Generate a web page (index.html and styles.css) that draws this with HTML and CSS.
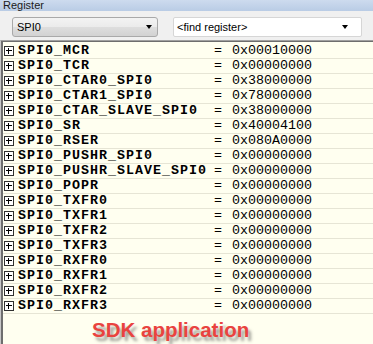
FILE: index.html
```html
<!DOCTYPE html>
<html lang="en">
<head>
    <meta charset="UTF-8">
    <meta name="viewport" content="width=device-width, initial-scale=1.0">
    <title>Register</title>
    <link rel="stylesheet" href="styles.css">
</head>
<body>
    <div class="panel">
        <div class="title">Register</div>

        <div class="toolbar">
            <div class="combo peripheral">
                <span>SPI0</span>
                <span class="arrow"></span>
            </div>
            <div class="combo finder">
                <span>&lt;find register&gt;</span>
                <span class="arrow"></span>
            </div>
        </div>

        <div class="list">
            <div class="row"><span class="expand"></span><span class="name">SPI0_MCR</span><span class="eq">=</span><span class="value">0x00010000</span></div>
            <div class="row"><span class="expand"></span><span class="name">SPI0_TCR</span><span class="eq">=</span><span class="value">0x00000000</span></div>
            <div class="row"><span class="expand"></span><span class="name">SPI0_CTAR0_SPI0</span><span class="eq">=</span><span class="value">0x38000000</span></div>
            <div class="row"><span class="expand"></span><span class="name">SPI0_CTAR1_SPI0</span><span class="eq">=</span><span class="value">0x78000000</span></div>
            <div class="row"><span class="expand"></span><span class="name">SPI0_CTAR_SLAVE_SPI0</span><span class="eq">=</span><span class="value">0x38000000</span></div>
            <div class="row"><span class="expand"></span><span class="name">SPI0_SR</span><span class="eq">=</span><span class="value">0x40004100</span></div>
            <div class="row"><span class="expand"></span><span class="name">SPI0_RSER</span><span class="eq">=</span><span class="value">0x080A0000</span></div>
            <div class="row"><span class="expand"></span><span class="name">SPI0_PUSHR_SPI0</span><span class="eq">=</span><span class="value">0x00000000</span></div>
            <div class="row"><span class="expand"></span><span class="name">SPI0_PUSHR_SLAVE_SPI0</span><span class="eq">=</span><span class="value">0x00000000</span></div>
            <div class="row"><span class="expand"></span><span class="name">SPI0_POPR</span><span class="eq">=</span><span class="value">0x00000000</span></div>
            <div class="row"><span class="expand"></span><span class="name">SPI0_TXFR0</span><span class="eq">=</span><span class="value">0x00000000</span></div>
            <div class="row"><span class="expand"></span><span class="name">SPI0_TXFR1</span><span class="eq">=</span><span class="value">0x00000000</span></div>
            <div class="row"><span class="expand"></span><span class="name">SPI0_TXFR2</span><span class="eq">=</span><span class="value">0x00000000</span></div>
            <div class="row"><span class="expand"></span><span class="name">SPI0_TXFR3</span><span class="eq">=</span><span class="value">0x00000000</span></div>
            <div class="row"><span class="expand"></span><span class="name">SPI0_RXFR0</span><span class="eq">=</span><span class="value">0x00000000</span></div>
            <div class="row"><span class="expand"></span><span class="name">SPI0_RXFR1</span><span class="eq">=</span><span class="value">0x00000000</span></div>
            <div class="row"><span class="expand"></span><span class="name">SPI0_RXFR2</span><span class="eq">=</span><span class="value">0x00000000</span></div>
            <div class="row"><span class="expand"></span><span class="name">SPI0_RXFR3</span><span class="eq">=</span><span class="value">0x00000000</span></div>

            <div class="caption">SDK application</div>
        </div>
    </div>
</body>
</html>
```

FILE: styles.css
```css
html, body {
    margin: 0;
    padding: 0;
    height: 100%;
}
body {
    font-family: "Liberation Sans", Arial, sans-serif;
    background-color: #f0f0f0;
    overflow: hidden;
}
.panel {
    display: flex;
    flex-direction: column;
    height: 344px;
}
.title {
    height: 11px;
    padding-left: 3px;
    font-size: 11px;
    line-height: 11px;
    color: #1a1a1a;
    background: linear-gradient(#cddbee, #b9cce5);
}
.toolbar {
    display: flex;
    gap: 15px;
    padding: 6px 0 3px 12px;
    background-color: #f0f0f0;
}
.combo {
    display: flex;
    align-items: center;
    justify-content: space-between;
    box-sizing: border-box;
    height: 20px;
    padding: 0 4px 0 4px;
    font-size: 11px;
    color: #000;
    border-radius: 3px;
}
.peripheral {
    width: 146px;
    border: 1px solid #a9a9a9;
    background: linear-gradient(#f3f3f3, #ebebeb 50%, #dedede 50%, #d2d2d2);
}
.finder {
    width: 189px;
    padding-left: 3px;
    padding-right: 12px;
    border: 1px solid #d6d6d6;
    border-radius: 2px;
    background-color: #fff;
}
.arrow {
    width: 0;
    height: 0;
    margin-right: 1px;
    border-left: 3.5px solid transparent;
    border-right: 3.5px solid transparent;
    border-top: 4px solid #000;
}
.list {
    flex: 1;
    background-color: #fffff0;
    border-top: 1px solid #a0a0a0;
    border-left: 1px solid #c8c8c8;
    box-shadow: inset 2px 1px 0 #6e6e6e;
    padding: 3px 0 0 2px;
}
.row {
    display: grid;
    grid-template-columns: 15px 196px 18px auto;
    align-items: center;
    height: 14px;
    border-bottom: 1px solid #e6e5d5;
    font-family: "Liberation Mono", "Courier New", monospace;
    font-size: 13.33px;
    line-height: 14px;
    color: #000;
}
.expand {
    position: relative;
    box-sizing: border-box;
    width: 10px;
    height: 10px;
    margin-left: 1px;
    border: 1px solid #303030;
    background-color: #fff;
}
.expand::before,
.expand::after {
    content: "";
    position: absolute;
    background-color: #000;
}
.expand::before {
    left: 1px;
    top: 3px;
    width: 6px;
    height: 1px;
}
.expand::after {
    left: 3px;
    top: 1px;
    width: 1px;
    height: 6px;
}
.name {
    font-weight: bold;
    letter-spacing: 1px;
    white-space: nowrap;
}
.value {
    white-space: nowrap;
}
.caption {
    margin-top: 4px;
    padding-left: 89px;
    font-size: 20.5px;
    line-height: 24px;
    font-weight: bold;
    color: #e9433f;
    text-shadow: 3px 4px 3px rgba(70, 70, 70, 0.5);
}
```
